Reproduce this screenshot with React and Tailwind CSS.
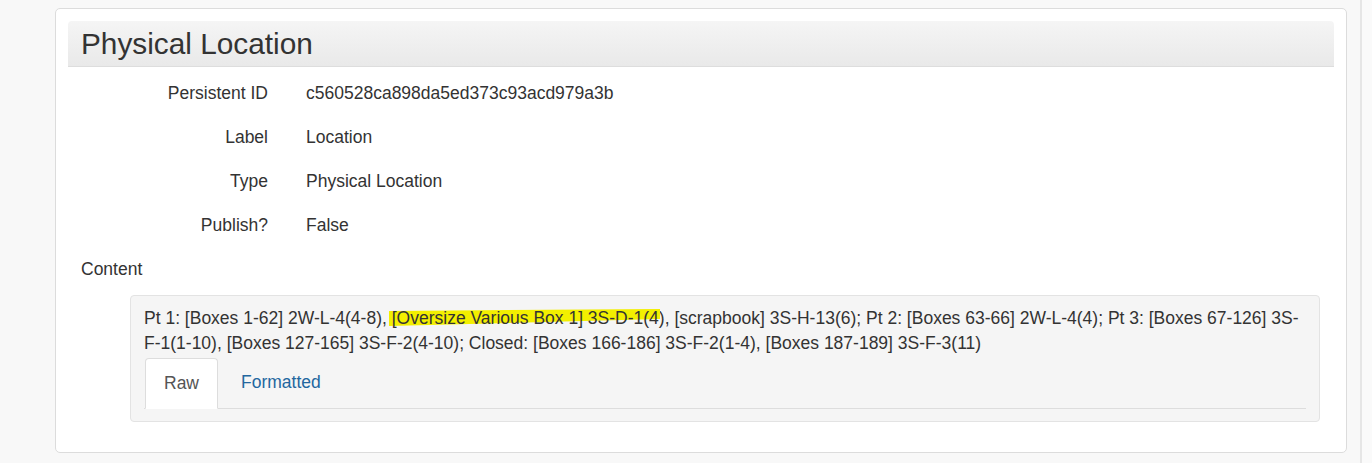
import React from "react";

function Row({ label, value }) {
  return (
    <div className="flex h-[44px] items-center">
      <div className="w-[200px] text-right">{label}</div>
      <div className="pl-[38px]">{value}</div>
    </div>
  );
}

export default function App() {
  return (
    <div
      className="flex min-h-[463px] w-[1372px] bg-[#f8f8f8] text-[#333] text-[17.5px] leading-[25px]"
      style={{ fontFamily: '"Liberation Sans", Arial, sans-serif' }}
    >
      <div className="ml-[55px] mt-[8px] mb-[10px] h-[445px] w-[1292px] rounded-[5px] border border-[#dcdcdc] bg-white px-[12px] pt-[12px]">
        <div className="flex h-[46px] items-center rounded-t-[4px] border-b border-[#dddddd] bg-gradient-to-b from-[#f5f5f5] to-[#e9e9e9] pl-[13px]">
          <h2 className="text-[29.8px] leading-[34px] font-normal text-[#333]">Physical Location</h2>
        </div>
        <div className="mt-[4px]">
          <Row label="Persistent ID" value="c560528ca898da5ed373c93acd979a3b" />
          <Row label="Label" value="Location" />
          <Row label="Type" value="Physical Location" />
          <Row label="Publish?" value="False" />
        </div>
        <div className="flex h-[44px] items-center pl-[13px]">Content</div>
        <div className="ml-[62px] mr-[14px] mt-[4px] rounded-[4px] border border-[#e3e3e3] bg-[#f5f5f5] px-[13px] pt-[10px] pb-[12px]">
          <p>
            Pt 1: [Boxes 1-62] 2W-L-4(4-8),{" "}
            <span className="relative">
              <svg
                className="absolute left-[-3px] top-[1px] h-[18px] w-[calc(100%+4px)]"
                viewBox="0 0 100 18"
                preserveAspectRatio="none"
              >
                <polygon points="0,2 100,0 100,10 0,17" fill="#f3ef00" />
              </svg>
              <span className="relative">[Oversize Various Box 1] 3S-D-1(4</span>
            </span>
            ), [scrapbook] 3S-H-13(6); Pt 2: [Boxes 63-66] 2W-L-4(4); Pt 3: [Boxes 67-126] 3S-F-1(1-10), [Boxes
            127-165] 3S-F-2(4-10); Closed: [Boxes 166-186] 3S-F-2(1-4), [Boxes 187-189] 3S-F-3(11)
          </p>
          <div className="mt-[2px] flex border-b border-[#dddddd]">
            <div className="-mb-px ml-px rounded-t-[4px] border border-[#dddddd] border-b-white bg-white px-[18px] py-[12px] text-[#555]">
              Raw
            </div>
            <div className="ml-[2px] px-[21px] py-[12px] text-[#23679f]">Formatted</div>
          </div>
        </div>
      </div>
      <div className="ml-[13px] w-[12px] border-l-2 border-[#e6e6e6] bg-[#fafafa]"></div>
    </div>
  );
}
